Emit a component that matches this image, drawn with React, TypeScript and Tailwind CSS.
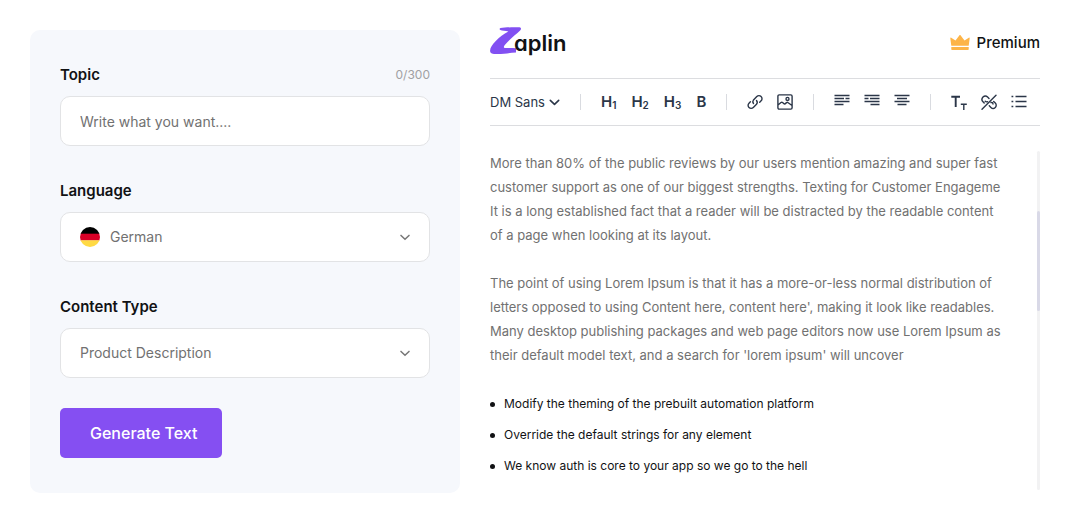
import { useState } from 'react';
import type { ReactNode } from 'react';

const LANGUAGES = ['German', 'English', 'French'];
const CONTENT_TYPES = ['Product Description', 'Blog Post', 'Email'];

const FEATURES = [
  'Modify the theming of the prebuilt automation platform',
  'Override the default strings for any element',
  'We know auth is core to your app so we go to the hell',
];

function Chevron({ className }: { className: string }) {
  return (
    <svg viewBox="0 0 12 8" className={className} fill="none" stroke="currentColor" strokeWidth="1.8" strokeLinecap="round" strokeLinejoin="round" aria-hidden="true">
      <path d="M1.2 1.500 6 6.200l4.800-4.700" />
    </svg>
  );
}

function GermanFlag() {
  return (
    <svg viewBox="0 0 20 20" className="size-5 shrink-0" aria-hidden="true">
      <clipPath id="flag-circle">
        <circle cx="10" cy="10" r="10" />
      </clipPath>
      <g clipPath="url(#flag-circle)">
        <rect width="20" height="7" fill="#000" />
        <rect y="6.700" width="20" height="6.800" fill="#d80027" />
        <rect y="13.300" width="20" height="6.700" fill="#ffda44" />
      </g>
    </svg>
  );
}

function Logo() {
  return (
    <a href="#" className="flex items-start">
      <svg viewBox="0 0 32 28" className="h-7 w-8 shrink-0" fill="#8250f2" aria-hidden="true">
        <path d="M10.500 1.100C15 .3 23.500.1 29.500.3c1.800.1 1.900 1.900.6 3.200C26 7.500 18.500 13 14.600 18.300c-1.300 1.700-.9 2.700.9 2.700 3-.1 7-.2 10.500.2v4.200c-6.500.2-11 1.700-19 1.700C2.500 27.100 0 26.200.1 23.500.3 18.500 9 9.500 18.400 4.600c-2.900-.7-6.100-.6-8.100-1.500-1-.5-1-1.700.2-2Z" />
      </svg>
      <span className="-ml-2 text-[22px] leading-8 font-semibold text-[#111214] [font-feature-settings:'cv11']">aplin</span>
    </a>
  );
}

function Crown() {
  return (
    <svg viewBox="0 0 20 16" className="h-4 w-5" fill="#fdb447" aria-hidden="true">
      <path d="M.3 3.200c0-.6.5-.8.900-.5L5.500 5.500 9.300.5c.4-.6 1-.6 1.400 0l3.800 5 4.300-2.800c.4-.3 1-.1.900.5L18.700 10.700H1.300Z" />
      <path d="M1.300 12h17.400v2.300c0 .4-.2.600-.6.600H1.900c-.4 0-.6-.2-.6-.6Z" />
    </svg>
  );
}

function ToolButton({ label, children }: { label: string; children: ReactNode }) {
  return (
    <button type="button" aria-label={label} className="flex size-4 shrink-0 items-center justify-center">
      {children}
    </button>
  );
}

function HeadingButton({ level }: { level: number }) {
  return (
    <button type="button" className="text-[15px] leading-5 font-semibold">
      H<sub className="-bottom-0.5 text-[10px] leading-none font-semibold">{level}</sub>
    </button>
  );
}

function Divider() {
  return <span className="h-4 w-px shrink-0 bg-[#d9dbe0]" />;
}

function LineIcon({ d }: { d: string }) {
  return (
    <svg viewBox="0 0 16 16" className="size-4" fill="none" stroke="currentColor" strokeWidth="1.400" strokeLinecap="round" strokeLinejoin="round" aria-hidden="true">
      <path d={d} />
    </svg>
  );
}

function Lines({ d }: { d: string }) {
  return (
    <svg viewBox="0 0 16 16" className="size-4" fill="none" stroke="currentColor" strokeWidth="1.500" aria-hidden="true">
      <path d={d} />
    </svg>
  );
}

function Toolbar() {
  return (
    <div className="flex h-12 items-center gap-5 border-y border-[#dcdde0] text-[#2b3648]">
      <button type="button" className="flex items-center gap-1 text-[13px] leading-5 whitespace-nowrap">
        DM Sans
        <Chevron className="h-[7px] w-[11px]" />
      </button>
      <Divider />
      <div className="flex items-center gap-[15px]">
        <HeadingButton level={1} />
        <HeadingButton level={2} />
        <HeadingButton level={3} />
        <button type="button" className="text-[15px] leading-5 font-semibold">B</button>
      </div>
      <Divider />
      <div className="flex items-center gap-3.5">
        <ToolButton label="Link">
          <LineIcon d="M6.500 9.500A3 3 0 0 1 6.500 5.900L9.800 2.500a3 3 0 0 1 4.300 0 3 3 0 0 1 0 4.300L12.700 8.200M9.500 6.500a3 3 0 0 1 0 3.800L6.300 13.500a3 3 0 0 1-4.300 0 3 3 0 0 1 0-4.300L3.400 7.800" />
        </ToolButton>
        <ToolButton label="Image">
          <LineIcon d="M2.200.9h11.600q1.300 0 1.300 1.300v11.600q0 1.300-1.300 1.300H2.200Q.9 15.100.9 13.800V2.200Q.9.9 2.200.9ZM1 11l3-2.500q.8-.6 1.600 0l1.300 1.200q.7.500 1.400-.1l1.300-1q.8-.6 1.600.1L15 11.500M12 4.900a1.500 1.500 0 1 1-3 0 1.500 1.500 0 0 1 3 0Z" />
        </ToolButton>
      </div>
      <Divider />
      <div className="flex items-center gap-3.5">
        <ToolButton label="Align left">
          <Lines d="M.5 1.500h15M.5 4.500h9.500M11.500 4.500h4M.5 7.500h15M.5 10.500h9" />
        </ToolButton>
        <ToolButton label="Align right">
          <Lines d="M.5 1.500h15M.5 4.500h4M6 4.500h9.500M.5 7.500h15M6.500 10.500h9" />
        </ToolButton>
        <ToolButton label="Align center">
          <Lines d="M.5 1.500h15M3 4.500h10M.5 7.500h15M3.500 10.500h9" />
        </ToolButton>
      </div>
      <Divider />
      <div className="flex items-center gap-3.5">
        <ToolButton label="Text size">
          <svg viewBox="0 0 16 16" className="size-4 overflow-visible" fill="none" stroke="currentColor" aria-hidden="true">
            <path d="M.3 2.700h8.700M4.700 2.700V13" strokeWidth="1.900" />
            <path d="M9.800 10.200h6M12.800 10.200v5.800" strokeWidth="1.400" />
          </svg>
        </ToolButton>
        <ToolButton label="Remove link">
          <LineIcon d="M1 15.200 15 1.200M3.200 9 2 7.700a3.300 3.300 0 0 1 0-4.600 3.300 3.300 0 0 1 4.600 0L8 4.500M6.500 7.700q-1.500.5-2.300-.4M8.300 11.800l1.600 1.600a3.100 3.100 0 0 0 4.400-4.400L12.700 7.500M10 8.500q1.800-.4 2 1.500" />
        </ToolButton>
        <ToolButton label="List">
          <Lines d="M.5 2.500h1.800M4.500 2.500h11M.5 7.500h1.800M4.500 7.500h11M.5 12.500h1.800M4.500 12.500h11" />
        </ToolButton>
      </div>
    </div>
  );
}

function SelectField({ id, label, options, icon }: { id: string; label: string; options: string[]; icon?: ReactNode }) {
  const [value, setValue] = useState(options[0]);

  return (
    <div className="flex flex-col gap-1.5">
      <label htmlFor={id} className="text-[15px] leading-[30px] font-semibold text-[#111214]">{label}</label>
      <div className="flex h-[50px] items-center gap-2.5 rounded-[10px] border border-[#e2e3e5] bg-white px-[19px]">
        {icon}
        <select
          id={id}
          value={value}
          onChange={(e) => setValue(e.target.value)}
          className="min-w-0 grow appearance-none bg-transparent text-sm text-[#717171] outline-none"
        >
          {options.map((o) => (
            <option key={o}>{o}</option>
          ))}
        </select>
        <Chevron className="pointer-events-none h-[7px] w-2.5 text-[#777777]" />
      </div>
    </div>
  );
}

export default function App() {
  const [topic, setTopic] = useState('');

  return (
    <main className="grid grid-cols-[430fr_550fr] items-start gap-[30px] bg-white px-[30px] font-[Inter,sans-serif]">
      <form className="mt-[30px] flex flex-col gap-[30px] rounded-[10px] bg-[#f6f8fc] px-[30px] pt-[30px] pb-[35px]" onSubmit={(e) => e.preventDefault()}>
        <div className="flex flex-col gap-1.5">
          <div className="flex items-center justify-between">
            <label htmlFor="topic" className="text-[15px] leading-[30px] font-semibold text-[#111214]">Topic</label>
            <span className="text-xs text-[#a0a0a3]">{topic.length}/300</span>
          </div>
          <input
            id="topic"
            type="text"
            maxLength={300}
            value={topic}
            onChange={(e) => setTopic(e.target.value)}
            placeholder="Write what you want...."
            className="h-[50px] w-full rounded-[10px] border border-[#e2e3e5] bg-white px-[19px] text-sm text-[#111214] outline-none placeholder:text-[#717171]"
          />
        </div>
        <SelectField id="language" label="Language" options={LANGUAGES} icon={<GermanFlag />} />
        <SelectField id="content-type" label="Content Type" options={CONTENT_TYPES} />
        <button type="submit" className="h-[50px] self-start rounded-[5px] bg-[#854ff2] pr-[25px] pl-[30px] text-base font-medium text-white">
          Generate Text
        </button>
      </form>

      <section className="flex min-w-0 flex-col">
        <header className="flex items-center justify-between pt-[27px] pb-[19px]">
          <Logo />
          <a href="#" className="flex items-center gap-[7px] text-[15px] font-medium text-[#111214]">
            <Crown />
            Premium
          </a>
        </header>
        <Toolbar />

        <div className="flex gap-[30px] pt-[25px]">
          <article className="grow pb-3">
            <div className="flex flex-col gap-6 text-[13px] leading-6 text-[#717171]">
              <p>
                More than 80% of the public reviews by our users mention amazing and super fast customer support as one of our
                biggest strengths. Texting for Customer Engageme It is a long established fact that a reader will be distracted
                by the readable content of a page when looking at its layout.
              </p>
              <p>
                The point of using Lorem Ipsum is that it has a more-or-less normal distribution of letters opposed to using
                Content here, content here', making it look like readables. Many desktop publishing packages and web page
                editors now use Lorem Ipsum as their default model text, and a search for 'lorem ipsum' will uncover
              </p>
            </div>
            <ul className="mt-[25px] flex flex-col gap-[7px] text-xs leading-6 text-[#111214]">
              {FEATURES.map((f) => (
                <li key={f} className="flex items-center gap-[9px]">
                  <span className="size-[5px] rounded-full bg-[#111214]" />
                  {f}
                </li>
              ))}
            </ul>
          </article>
          <div className="w-[3px] shrink-0 rounded-full bg-[#f2f2f3] pt-[60px]">
            <div className="h-[100px] rounded-full bg-[#d9d9e7]" />
          </div>
        </div>
      </section>
    </main>
  );
}
